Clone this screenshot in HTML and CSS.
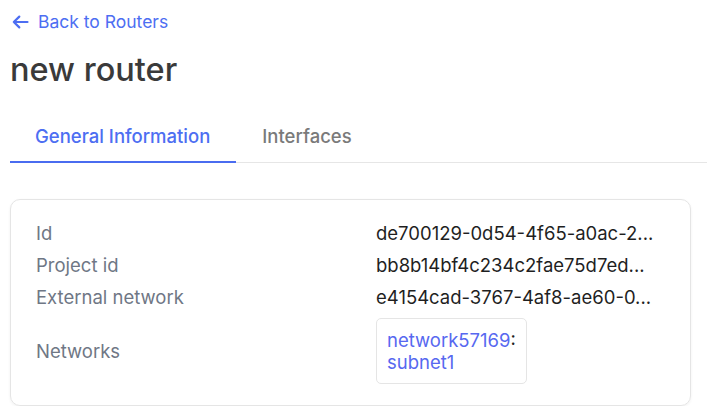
FILE: index.html
```html
<!DOCTYPE html>
<html>
<head>
<meta charset="utf-8">
<link rel="stylesheet" href="styles.css">
</head>
<body>
<div class="page">
  <a class="back" href="#">
    <svg class="back-icon" width="17" height="16" viewBox="0 0 17 16" fill="none" stroke="currentColor" stroke-width="2.2" stroke-linecap="round" stroke-linejoin="round"><path d="M15.5 8H1.8M7.3 2.6L1.8 8l5.5 5.4"/></svg>
    <span>Back to Routers</span>
  </a>
  <h1 class="title">new router</h1>
  <div class="tabs">
    <div class="tab active">General Information</div>
    <div class="tab">Interfaces</div>
  </div>
  <div class="card">
    <div class="row"><div class="label">Id</div><div class="value">de700129-0d54-4f65-a0ac-2...</div></div>
    <div class="row"><div class="label">Project id</div><div class="value">bb8b14bf4c234c2fae75d7ed...</div></div>
    <div class="row"><div class="label">External network</div><div class="value">e4154cad-3767-4af8-ae60-0...</div></div>
    <div class="row networks"><div class="label">Networks</div><div class="value-box"><div class="netbox"><a href="#" class="link">network57169</a>:<br><a href="#" class="link">subnet1</a></div></div></div>
  </div>
</div>
</body>
</html>
```

FILE: styles.css
```css
* { box-sizing: border-box; }
html, body { margin: 0; padding: 0; background: #fff; }
body { font-family: Inter, "Noto Sans", sans-serif; color: #1f1f1f; }
.page { padding: 10px 16px 0 10px; width: 707px; }
.back { display: flex; align-items: center; gap: 9px; color: #4d6ef2; text-decoration: none; font-size: 17.5px; line-height: 24px; padding-left: 2px; }
.back-icon { display: block; }
.title { margin: 16px 0 0 0; font-size: 32.5px; line-height: 40px; font-weight: 500; color: #3a3a3a; }
.tabs { display: flex; margin-top: 22px; margin-right: -16px; border-bottom: 1px solid #e6e6e6; }
.tab { padding: 12px 26px 13px; font-size: 18.5px; line-height: 24px; color: #7a7a7a; font-weight: 500; margin-bottom: -1px; border-bottom: 2px solid transparent; }
.tab.active { color: #4d6ef2; border-bottom-color: #4a6cf0; }
.tab:first-child { padding-left: 25px; }
.card { margin-top: 36px; border: 1px solid #e5e5e5; border-radius: 10px; padding: 17px 25px 17px; box-shadow: 0 1px 3px rgba(0,0,0,0.06); }
.row { display: grid; grid-template-columns: 340px 1fr; align-items: center; font-size: 18.5px; line-height: 24px; padding: 4px 0 4px; }
.label { color: #6f7785; }
.value { white-space: nowrap; color: #1f1f1f; }
.row.networks { padding-top: 5px; }
.netbox { display: inline-block; border: 1px solid #e5e5e5; border-radius: 5px; padding: 10px; line-height: 22px; }
.link { color: #5768f0; text-decoration: none; }
```
